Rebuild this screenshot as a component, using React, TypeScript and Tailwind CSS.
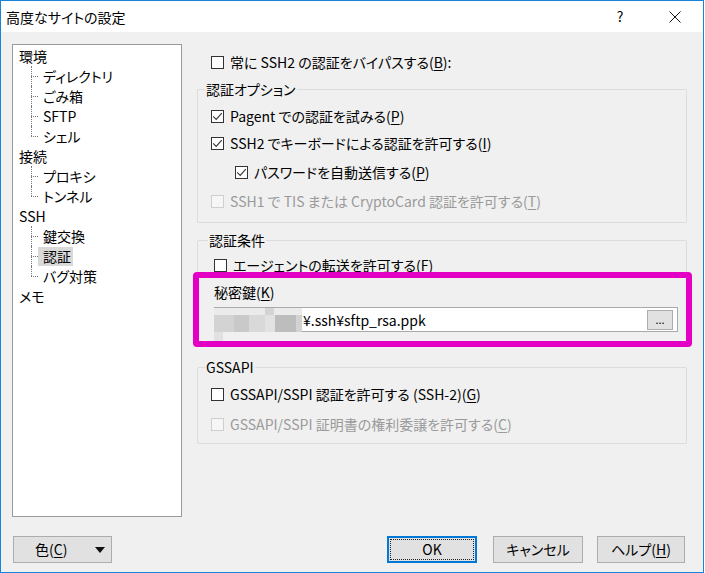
import React from "react";

type TreeNode = { label: string; children?: string[] };

const tree: TreeNode[] = [
  { label: "環境", children: ["ディレクトリ", "ごみ箱", "SFTP", "シェル"] },
  { label: "接続", children: ["プロキシ", "トンネル"] },
  { label: "SSH", children: ["鍵交換", "認証", "バグ対策"] },
  { label: "メモ" },
];

const SELECTED = "認証";

// tree connector: vertical stem plus a short horizontal branch, dotted
function Connector({ last }: { last: boolean }) {
  return (
    <div className="w-[18px] h-[20px] shrink-0 flex">
      <div className="w-[11px]" />
      <div className="flex flex-col w-[7px]">
        <div className="h-[10px] w-[7px] border-l border-dotted border-[#7a7a7a]" />
        <div
          className={
            last
              ? "h-[10px] w-[7px] border-t border-dotted border-[#7a7a7a]"
              : "h-[10px] w-[7px] border-t border-l border-dotted border-[#7a7a7a]"
          }
        />
      </div>
    </div>
  );
}

function TreePanel() {
  return (
    <div className="w-[170px] h-[473px] shrink-0 border border-[#9a9a9a] bg-white pt-[1px]">
      {tree.map((node) => (
        <div key={node.label}>
          <div className="h-[20px] flex items-center pl-[6px] leading-[20px]">{node.label}</div>
          {node.children?.map((child, i) => {
            const last = i === node.children!.length - 1;
            const sel = child === SELECTED;
            return (
              <div key={child} className="h-[20px] flex items-center pl-[7px]">
                <Connector last={last} />
                <span
                  className={
                    sel
                      ? "h-[19px] flex items-center pl-[5px] pr-[2px] bg-[#d9d9d9]"
                      : "h-[19px] flex items-center pl-[5px] pr-[2px]"
                  }
                >
                  {child}
                </span>
              </div>
            );
          })}
        </div>
      ))}
    </div>
  );
}

function CheckBox({ checked = false, disabled = false }: { checked?: boolean; disabled?: boolean }) {
  return (
    <span
      className={
        disabled
          ? "w-[13px] h-[13px] shrink-0 border border-[#cfcfcf] bg-[#f6f6f6] flex items-center justify-center"
          : "w-[13px] h-[13px] shrink-0 border border-[#333333] bg-white flex items-center justify-center"
      }
    >
      {checked && (
        <svg width="11" height="11" viewBox="0 0 11 11">
          <polyline points="1.2,5.4 4.2,8.4 9.8,2.2" fill="none" stroke="#333333" strokeWidth="1.1" />
        </svg>
      )}
    </span>
  );
}

function Mn({ k }: { k: string }) {
  return (
    <>
      (<span className="underline decoration-1 underline-offset-[2px]">{k}</span>)
    </>
  );
}

function CheckRow({
  checked,
  disabled,
  className = "",
  children,
}: {
  checked?: boolean;
  disabled?: boolean;
  className?: string;
  children: React.ReactNode;
}) {
  return (
    <div className={"h-[20px] flex items-center gap-[6px] " + className}>
      <CheckBox checked={checked} disabled={disabled} />
      <span className={disabled ? "text-[#9a9a9a] whitespace-nowrap" : "whitespace-nowrap"}>{children}</span>
    </div>
  );
}

function Group({
  title,
  titleLeft,
  className,
  children,
}: {
  title: string;
  titleLeft: string;
  className: string;
  children: React.ReactNode;
}) {
  return (
    <div className={"relative border border-[#dcdcdc] rounded-[2px] " + className}>
      <span className={"absolute -top-[9px] " + titleLeft + " px-[1px] leading-[16px] bg-[#f0f0f0] whitespace-nowrap"}>
        {title}
      </span>
      {children}
    </div>
  );
}

// pixelated patch covering part of the key path
const mosaic: { x: number; y: number; w: number; h: number; c: string }[] = [
  { x: 0, y: 0, w: 88, h: 7, c: "#ebebeb" },
  { x: 51, y: 0, w: 9, h: 7, c: "#d4d4d4" },
  { x: 0, y: 7, w: 20, h: 17, c: "#d3d3d3" },
  { x: 20, y: 7, w: 15, h: 17, c: "#c9c9c9" },
  { x: 35, y: 7, w: 16, h: 17, c: "#d9d9d9" },
  { x: 51, y: 7, w: 10, h: 17, c: "#e2e2e2" },
  { x: 61, y: 7, w: 21, h: 17, c: "#bdbdbd" },
  { x: 82, y: 7, w: 6, h: 17, c: "#d2d2d2" },
  { x: 0, y: 24, w: 9, h: 9, c: "#e1e1e1" },
];

function KeyField() {
  return (
    <div className="relative mt-[5px] mr-[8px] h-[25px] border border-[#a9a9a9] bg-white flex items-center">
      <span className="pl-[88px] flex-1 whitespace-nowrap leading-[20px]">¥.ssh¥sftp_rsa.ppk</span>
      <span className="mr-[4px] w-[26px] h-[20px] border border-[#adadad] bg-[#e1e1e1] flex items-center justify-center text-[11px] leading-none pb-[1px]">
        ...
      </span>
      <div className="absolute -left-[1px] top-[0px] w-[88px] h-[33px]">
        {mosaic.map((b, i) => (
          <span
            key={i}
            className="absolute"
            style={{ left: b.x, top: b.y, width: b.w, height: b.h, background: b.c }}
          />
        ))}
      </div>
    </div>
  );
}

function Button({
  w,
  className = "",
  focused = false,
  children,
}: {
  w: string;
  className?: string;
  focused?: boolean;
  children: React.ReactNode;
}) {
  return (
    <div
      className={
        (focused
          ? "relative border-2 border-[#0078d7] "
          : "relative border border-[#adadad] ") +
        "h-[27px] bg-[#e1e1e1] flex items-center justify-center whitespace-nowrap " +
        w +
        " " +
        className
      }
    >
      {focused && <span className="absolute inset-[1px] border border-dotted border-[#222222]" />}
      {children}
    </div>
  );
}

export default function App() {
  return (
    <div className="w-[705px] h-[573px] bg-white">
      <div className="w-[704px] h-[573px] flex flex-col border border-[#1883d7] text-[14px] text-black font-['Noto_Sans_CJK_JP','Noto_Sans_CJK_SC',sans-serif] [font-feature-settings:'palt']">
        {/* title bar */}
        <div className="h-[31px] shrink-0 bg-white flex items-center">
          <span className="pl-[5px] flex-1 leading-[20px]">高度なサイトの設定</span>
          <span className="w-[46px] h-[31px] flex items-center justify-center">?</span>
          <span className="w-[46px] h-[31px] flex items-center justify-center ml-[9px]">
            <svg width="12" height="12" viewBox="0 0 12 12">
              <path d="M0.5 0.5 L11.5 11.5 M11.5 0.5 L0.5 11.5" stroke="#111111" strokeWidth="1" />
            </svg>
          </span>
          <span className="w-[5px]" />
        </div>

        {/* dialog body */}
        <div className="flex-1 bg-[#f0f0f0] flex flex-col pt-[12px] pl-[11px]">
          <div className="flex gap-[15px]">
            <TreePanel />

            <div className="w-[490px] flex flex-col">
              <CheckRow className="mt-[8px] pl-[14px]">
                常に SSH2 の認証をバイパスする<Mn k="B" />:
              </CheckRow>

              <Group title="認証オプション" titleLeft="left-[7px]" className="mt-[17px] pt-[16px] pb-[11px] pl-[13px]">
                <CheckRow checked>
                  Pagent での認証を試みる<Mn k="P" />
                </CheckRow>
                <CheckRow checked className="mt-[7px]">
                  SSH2 でキーボードによる認証を許可する<Mn k="I" />
                </CheckRow>
                <CheckRow checked className="mt-[9px] pl-[24px]">
                  パスワードを自動送信する<Mn k="P" />
                </CheckRow>
                <CheckRow disabled className="mt-[9px]">
                  SSH1 で TIS または CryptoCard 認証を許可する<Mn k="T" />
                </CheckRow>
              </Group>

              <Group title="認証条件" titleLeft="left-[10px]" className="mt-[17px] pt-[14px] pb-[10px] pl-[16px]">
                <CheckRow>
                  エージェントの転送を許可する<Mn k="F" />
                </CheckRow>
                <div className="mt-[7px] h-[20px] flex items-center">
                  秘密鍵<Mn k="K" />
                </div>
                <KeyField />
                {/* highlight frame drawn over the key settings */}
                <div className="absolute left-[-5px] right-[-6px] top-[31px] bottom-[-5px] border-[6px] border-[#e300c4] rounded-[4px] pointer-events-none" />
              </Group>

              <Group title="GSSAPI" titleLeft="left-[7px]" className="mt-[24px] pt-[16px] pb-[9px] pl-[13px]">
                <CheckRow>
                  GSSAPI/SSPI 認証を許可する (SSH-2)<Mn k="G" />
                </CheckRow>
                <CheckRow disabled className="mt-[10px]">
                  GSSAPI/SSPI 証明書の権利委譲を許可する<Mn k="C" />
                </CheckRow>
              </Group>
            </div>
          </div>

          {/* button row */}
          <div className="mt-[19px] flex items-center">
            <Button w="w-[99px]" className="ml-[1px]">
              <span className="flex items-center w-full">
                <span className="ml-[21px]">
                  色<Mn k="C" />
                </span>
                <svg width="10" height="6" viewBox="0 0 10 6" className="ml-[28px]">
                  <path d="M0 0 H10 L5 6 Z" fill="#111111" />
                </svg>
              </span>
            </Button>
            <Button w="w-[90px]" focused className="ml-[275px]">
              OK
            </Button>
            <Button w="w-[90px]" className="ml-[16px]">
              キャンセル
            </Button>
            <Button w="w-[88px]" className="ml-[14px]">
              ヘルプ<Mn k="H" />
            </Button>
          </div>
        </div>
      </div>
    </div>
  );
}
